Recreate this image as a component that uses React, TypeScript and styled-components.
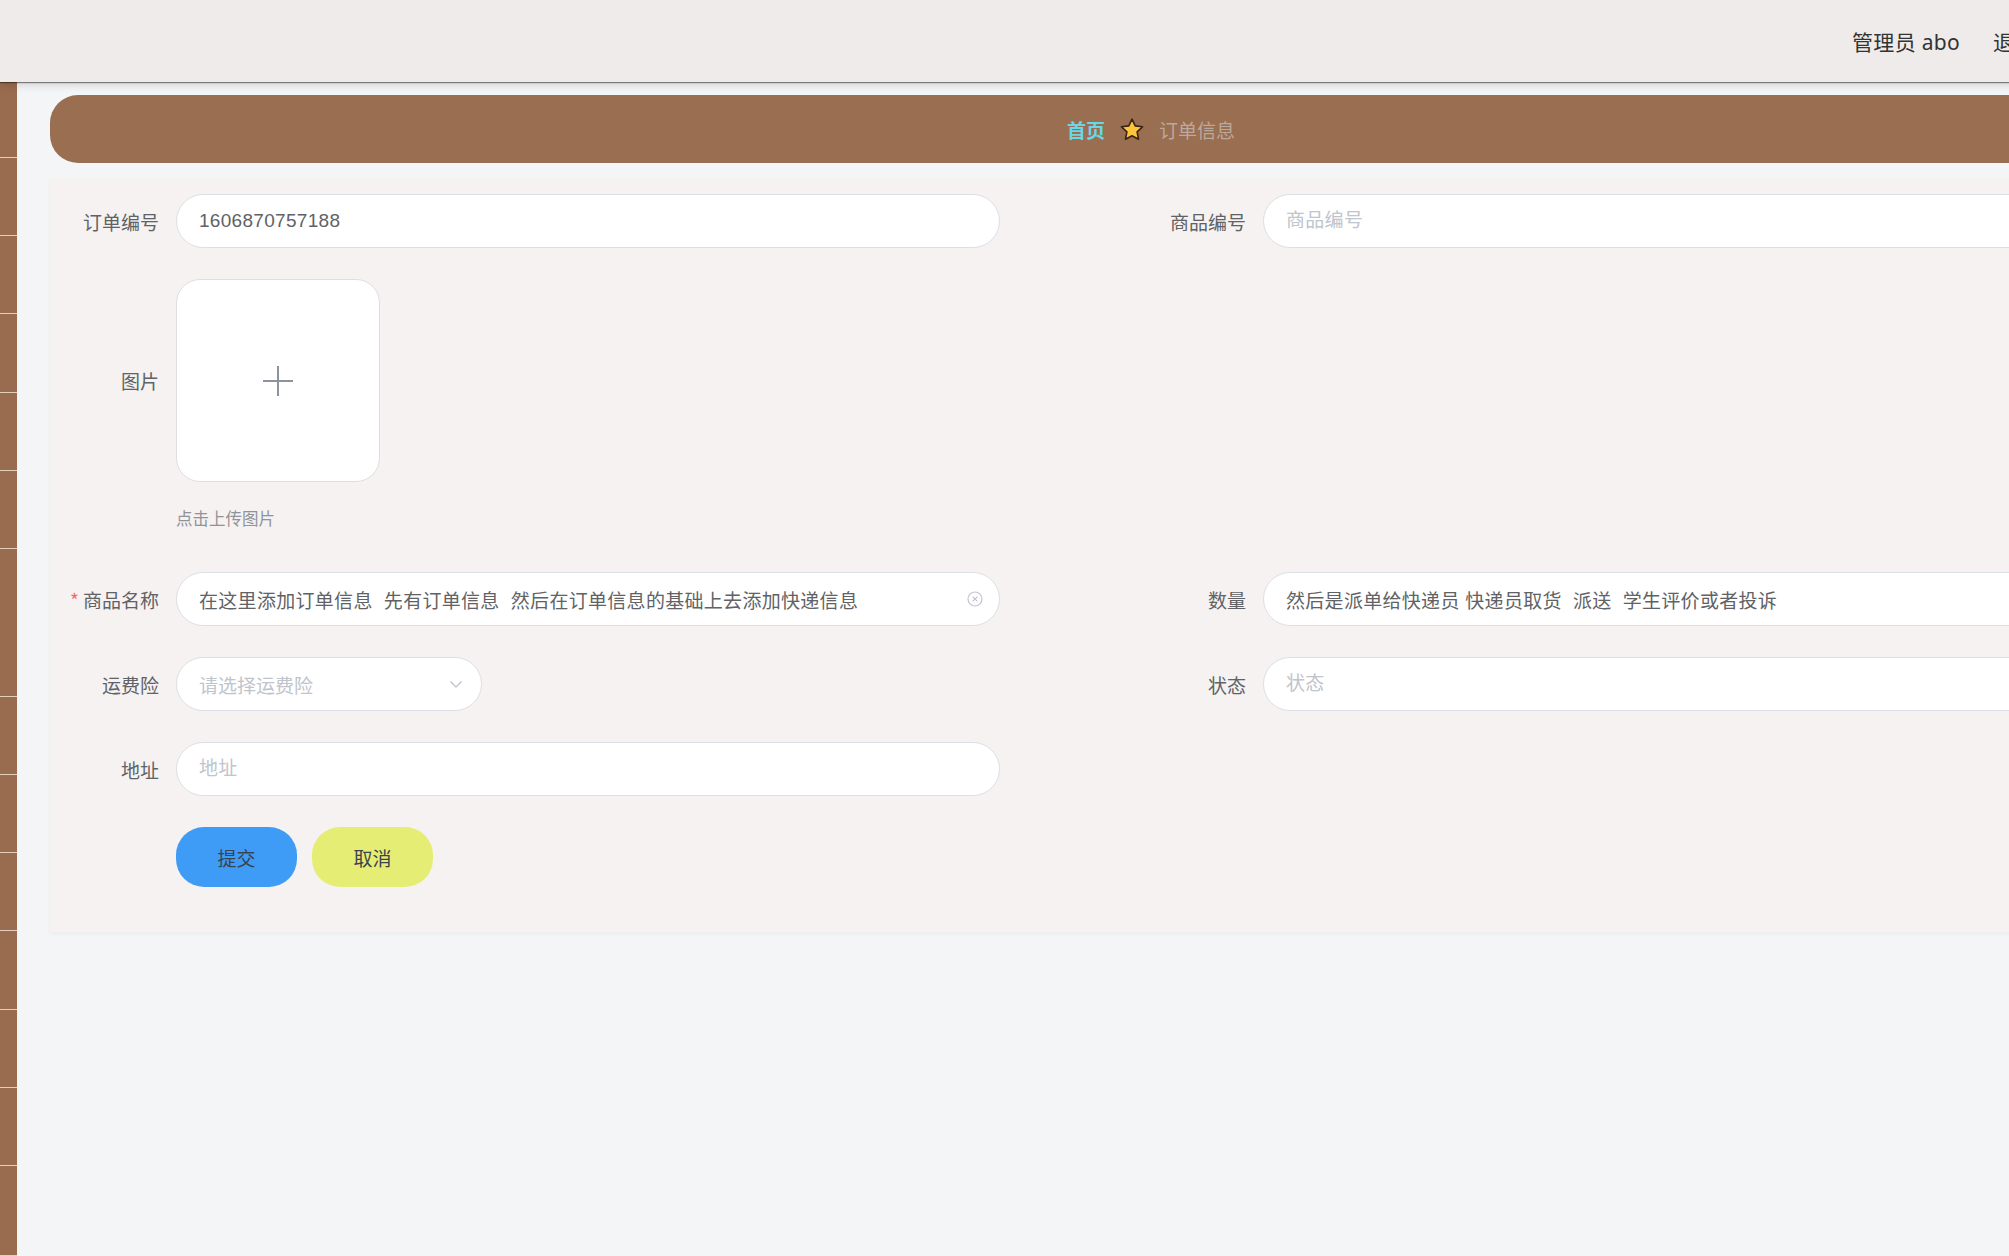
import React from 'react';
import styled, { createGlobalStyle } from 'styled-components';

const GlobalStyle = createGlobalStyle`
	html, body {
		margin: 0;
		padding: 0;
		overflow: hidden;
		background: #f4f5f7;
	}
	body {
		font-family: "Liberation Sans", "Noto Sans CJK SC", sans-serif;
	}
	* {
		box-sizing: border-box;
	}
`

const Page = styled.div`
	width: 2285px;
	min-height: 100vh;
	display: flex;
	flex-direction: column;
	background: #f4f5f7;
`
const TopBar = styled.header`
	height: 82px;
	flex-shrink: 0;
	background: #efebea;
	display: flex;
	align-items: center;
	justify-content: flex-end;
	padding-right: 250px;
	box-shadow: 0 1px 1px rgba(0, 0, 0, 0.45), 0 3px 8px rgba(0, 0, 0, 0.14);
	position: relative;
	z-index: 2;
	font-family: "Noto Sans", "Noto Sans CJK SC", sans-serif;
	font-size: 21px;
	color: #333;
`
const UserName = styled.span`
	margin-right: 33px;
	letter-spacing: 0.3px;
`
const Body = styled.div`
	flex: 1;
	display: flex;
`
const SideBar = styled.nav`
	width: 17px;
	flex-shrink: 0;
	background: #996c4f;
	display: flex;
	flex-direction: column;
`
const SideItem = styled.div<{ $h: number }>`
	height: ${(p) => p.$h}px;
	border-bottom: 1px solid #e4cfbf;
`
const Main = styled.main`
	flex: 1;
	padding: 13px 33px 0;
`
const Crumb = styled.div`
	height: 68px;
	border-radius: 28px;
	background: #9a6e50;
	display: flex;
	align-items: center;
	justify-content: center;
	gap: 15px;
	font-family: "Noto Sans CJK SC", sans-serif;
	font-size: 19px;
`
const CrumbHome = styled.span`
	color: #68d7e6;
	font-weight: bold;
`
const CrumbCurrent = styled.span`
	color: #bca99e;
`
const FormCard = styled.section`
	margin-top: 15px;
	background: #f5f2f1;
	padding: 16px 14px 45px;
	box-shadow: 0 2px 4px rgba(0, 0, 0, 0.04);
`
const FormGrid = styled.div`
	display: grid;
	grid-template-columns: 1087px 1087px;
	row-gap: 31px;
`
const Item = styled.div`
	display: flex;
	align-items: flex-start;
`
const Label = styled.label<{ $h?: number }>`
	width: 112px;
	height: ${(p) => p.$h ?? 54}px;
	flex-shrink: 0;
	display: flex;
	align-items: center;
	justify-content: flex-end;
	padding-right: 17px;
	font-size: 19px;
	color: #606266;
	font-family: "Noto Sans CJK SC", sans-serif;
`
const Required = styled.span`
	color: #f56c6c;
	margin-right: 4px;
`
const Field = styled.div`
	position: relative;
`
const TextInput = styled.input<{ $w?: number }>`
	width: ${(p) => p.$w ?? 824}px;
	height: 54px;
	border: 1px solid #dcdfe6;
	border-radius: 27px;
	background: #fff;
	padding: 0 22px;
	font-family: inherit;
	font-size: 19px;
	letter-spacing: 0.3px;
	color: #606266;
	outline: none;

	&::placeholder {
		color: #c0c4cc;
	}
`
const ClearIcon = styled.svg`
	position: absolute;
	right: 17px;
	top: 19px;
`
const SelectBox = styled.div`
	width: 306px;
	height: 54px;
	border: 1px solid #dcdfe6;
	border-radius: 27px;
	background: #fff;
	padding: 0 18px 0 22px;
	display: flex;
	align-items: center;
	justify-content: space-between;
	font-size: 19px;
	color: #c0c4cc;
	font-family: "Noto Sans CJK SC", sans-serif;
`
const UploadBox = styled.div`
	width: 204px;
	height: 203px;
	border: 1px solid #e0dfe0;
	border-radius: 24px;
	background: #fff;
	display: flex;
	align-items: center;
	justify-content: center;
`
const UploadTip = styled.div`
	margin: 26px 0 13px;
	line-height: 20px;
	font-size: 16.5px;
	color: #909399;
	font-family: "Noto Sans CJK SC", sans-serif;
`
const ButtonRow = styled.div`
	display: flex;
	gap: 15px;
`
const Btn = styled.button<{ $bg: string }>`
	width: 121px;
	height: 60px;
	border: none;
	border-radius: 28px;
	background: ${(p) => p.$bg};
	color: #3a4350;
	font-family: "Noto Sans CJK SC", sans-serif;
	font-size: 19px;
	cursor: pointer;
`

// heights of the menu entries in the collapsed side bar
const sideItems = [76, 78, 78, 79, 78, 78, 148, 78, 78, 78, 79, 78, 78, 90];

const Star = () => (
	<svg width="24" height="23" viewBox="0 0 24 23">
		<path
			d="M12 1.2l3.2 6.7 7.3.9-5.4 5.1 1.4 7.3L12 17.7l-6.5 3.5 1.4-7.3-5.4-5.1 7.3-.9z"
			fill="#fcc63c"
			stroke="#3a2413"
			strokeWidth="1.6"
			strokeLinejoin="round"
		/>
	</svg>
)

const App: React.FC = () => {
	return (
		<Page>
			<GlobalStyle />
			<TopBar>
				<UserName>管理员 abo</UserName>
				<span>退出</span>
			</TopBar>
			<Body>
				<SideBar>
					{sideItems.map((h, i) => (
						<SideItem key={i} $h={h} />
					))}
				</SideBar>
				<Main>
					<Crumb>
						<CrumbHome>首页</CrumbHome>
						<Star />
						<CrumbCurrent>订单信息</CrumbCurrent>
					</Crumb>

					<FormCard>
						<FormGrid>
							<Item>
								<Label>订单编号</Label>
								<TextInput readOnly value="1606870757188" />
							</Item>
							<Item>
								<Label>商品编号</Label>
								<TextInput placeholder="商品编号" />
							</Item>

							<Item>
								<Label $h={203}>图片</Label>
								<div>
									<UploadBox>
										<svg width="32" height="32" viewBox="0 0 32 32">
											<path d="M16 1v30M1 16h30" stroke="#8c939d" strokeWidth="2" />
										</svg>
									</UploadBox>
									<UploadTip>点击上传图片</UploadTip>
								</div>
							</Item>
							<div />

							<Item>
								<Label><Required>*</Required>商品名称</Label>
								<Field>
									<TextInput
										readOnly
										value="在这里添加订单信息  先有订单信息  然后在订单信息的基础上去添加快递信息"
									/>
									<ClearIcon width="16" height="16" viewBox="0 0 16 16">
										<circle cx="8" cy="8" r="7" fill="none" stroke="#c0c4cc" strokeWidth="1.2" />
										<path d="M5.6 5.6l4.8 4.8M10.4 5.6l-4.8 4.8" stroke="#c0c4cc" strokeWidth="1.2" />
									</ClearIcon>
								</Field>
							</Item>
							<Item>
								<Label>数量</Label>
								<TextInput readOnly value="然后是派单给快递员 快递员取货  派送  学生评价或者投诉" />
							</Item>

							<Item>
								<Label>运费险</Label>
								<SelectBox>
									<span>请选择运费险</span>
									<svg width="14" height="14" viewBox="0 0 14 14">
										<path d="M1.5 4.5L7 10l5.5-5.5" fill="none" stroke="#c0c4cc" strokeWidth="1.4" />
									</svg>
								</SelectBox>
							</Item>
							<Item>
								<Label>状态</Label>
								<TextInput placeholder="状态" />
							</Item>

							<Item>
								<Label>地址</Label>
								<TextInput placeholder="地址" />
							</Item>
							<div />

							<Item>
								<Label $h={60} />
								<ButtonRow>
									<Btn $bg="#3e9cf7">提交</Btn>
									<Btn $bg="#e5ed74">取消</Btn>
								</ButtonRow>
							</Item>
						</FormGrid>
					</FormCard>
				</Main>
			</Body>
		</Page>
	)
}

export default App
